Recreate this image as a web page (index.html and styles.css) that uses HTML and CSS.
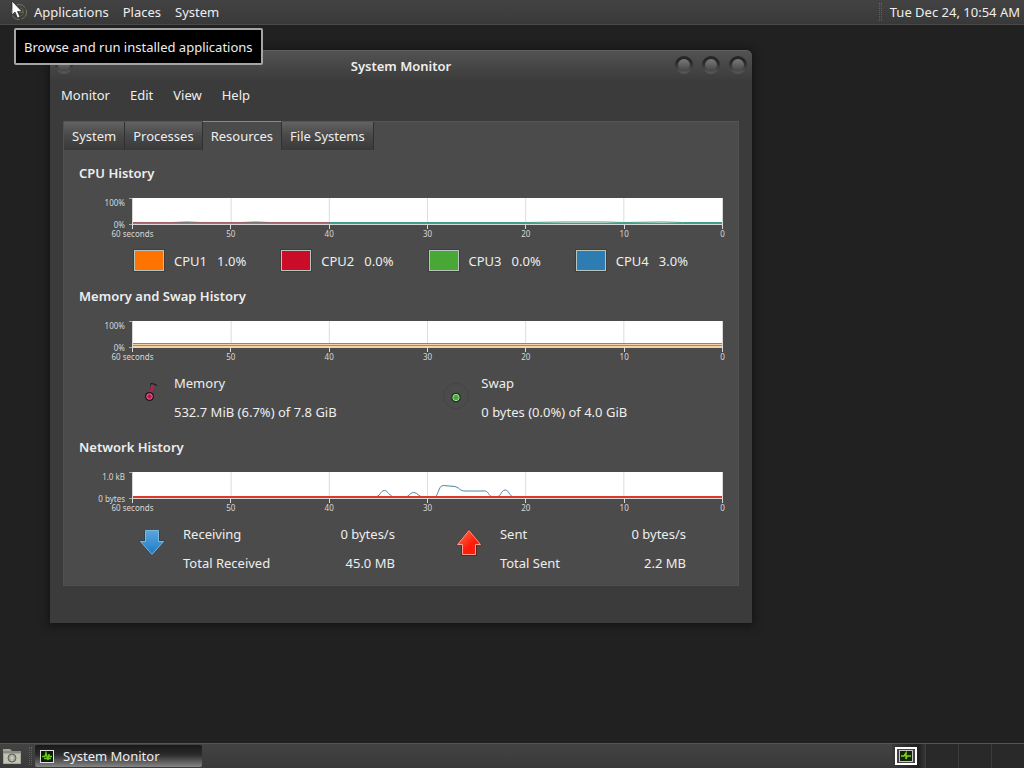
FILE: index.html
```html
<!DOCTYPE html>
<html lang="en">
<head>
  <meta charset="UTF-8">
  <meta name="viewport" content="width=device-width, initial-scale=1.0">
  <title>System Monitor</title>
  <link rel="stylesheet" href="styles.css">
</head>
<body>
  <header class="panel panel-top">
    <svg class="menu-logo" viewBox="0 0 18 18" aria-hidden="true">
      <circle cx="9" cy="9" r="7.5" fill="none" stroke="#77775c" stroke-dasharray="9 2"/>
      <circle cx="9" cy="9" r="4.5" fill="none" stroke="#62624e" stroke-dasharray="8 3"/>
      <path d="M9 9h4" stroke="#85856a"/>
    </svg>
    <nav class="panel-menu">
      <button type="button">Applications</button>
      <button type="button">Places</button>
      <button type="button">System</button>
    </nav>
    <span class="grip"></span>
    <time class="clock" datetime="2019-12-24T10:54">Tue Dec 24, 10:54 AM</time>
  </header>

  <main class="desktop">
    <section class="window">
      <div class="titlebar">
        <button type="button" class="window-button" aria-label="Window menu"></button>
        <h1>System Monitor</h1>
        <div class="window-controls">
          <button type="button" class="window-button" aria-label="Minimize"></button>
          <button type="button" class="window-button" aria-label="Maximize"></button>
          <button type="button" class="window-button" aria-label="Close"></button>
        </div>
      </div>

      <nav class="menubar">
        <button type="button">Monitor</button>
        <button type="button">Edit</button>
        <button type="button">View</button>
        <button type="button">Help</button>
      </nav>

      <div class="notebook">
        <div class="tabs" role="tablist">
          <button type="button" class="tab" role="tab">System</button>
          <button type="button" class="tab" role="tab">Processes</button>
          <button type="button" class="tab active" role="tab" aria-selected="true">Resources</button>
          <button type="button" class="tab" role="tab">File Systems</button>
        </div>

        <div class="resources">
          <section class="history">
            <h2>CPU History</h2>
            <div class="chart">
              <div class="y-axis"><span>100%</span><span>0%</span></div>
              <div class="plot">
                <svg viewBox="0 0 600 26" preserveAspectRatio="none">
                  <path class="grid-line" d="M100 0V26M200 0V26M300 0V26M400 0V26M500 0V26"/>
                  <path class="line cpu3" d="M0 25.5H600"/>
                  <path class="line cpu4" d="M0 24.5H400L440 24H480L500 24.5L540 24L560 24.5H600"/>
                  <path class="line cpu2" d="M0 24.5H40L55 24L70 24.5H110L125 24L140 24.5H200"/>
                </svg>
              </div>
              <div class="x-axis"><span>60 seconds</span><span>50</span><span>40</span><span>30</span><span>20</span><span>10</span><span>0</span></div>
            </div>
            <div class="cpu-legend">
              <div class="cpu"><button type="button" class="swatch orange" aria-label="CPU1 color"></button><span>CPU1</span><span>1.0%</span></div>
              <div class="cpu"><button type="button" class="swatch red" aria-label="CPU2 color"></button><span>CPU2</span><span>0.0%</span></div>
              <div class="cpu"><button type="button" class="swatch green" aria-label="CPU3 color"></button><span>CPU3</span><span>0.0%</span></div>
              <div class="cpu"><button type="button" class="swatch blue" aria-label="CPU4 color"></button><span>CPU4</span><span>3.0%</span></div>
            </div>
          </section>

          <section class="history">
            <h2>Memory and Swap History</h2>
            <div class="chart">
              <div class="y-axis"><span>100%</span><span>0%</span></div>
              <div class="plot">
                <svg viewBox="0 0 600 26" preserveAspectRatio="none">
                  <path class="grid-line" d="M100 0V26M200 0V26M300 0V26M400 0V26M500 0V26"/>
                  <path class="mem-fill" d="M0 23H600V26H0Z"/>
                  <path class="line mem" d="M0 22.5H600"/>
                  <path class="line swap" d="M0 24.5H600"/>
                </svg>
              </div>
              <div class="x-axis"><span>60 seconds</span><span>50</span><span>40</span><span>30</span><span>20</span><span>10</span><span>0</span></div>
            </div>
            <div class="mem-legend">
              <div class="mem-item">
                <svg class="pie" viewBox="0 0 32 32" aria-hidden="true">
                  <path d="M17 17V6.500Q20 6.500 23 8.500" fill="none" stroke="#1c1114"/>
                  <path d="M15.500 18L17 7.500L20.500 8.500L17.500 18Z" fill="#a82850"/>
                  <circle cx="15.500" cy="19.500" r="4.500" fill="#24121a"/>
                  <circle cx="15.500" cy="19.500" r="2.800" fill="#c0184c" stroke="#f0719b"/>
                </svg>
                <dl><dt>Memory</dt><dd>532.7 MiB (6.7%) of 7.8 GiB</dd></dl>
              </div>
              <div class="mem-item">
                <svg class="pie" viewBox="0 0 32 32" aria-hidden="true">
                  <circle cx="15" cy="19" r="12.500" fill="none" stroke="#444"/>
                  <circle cx="15" cy="20.500" r="4.800" fill="#1b301b"/>
                  <circle cx="15" cy="20.500" r="3.200" fill="#49a83c" stroke="#a3e29a"/>
                </svg>
                <dl><dt>Swap</dt><dd>0 bytes (0.0%) of 4.0 GiB</dd></dl>
              </div>
            </div>
          </section>

          <section class="history">
            <h2>Network History</h2>
            <div class="chart">
              <div class="y-axis"><span>1.0 kB</span><span>0 bytes</span></div>
              <div class="plot">
                <svg viewBox="0 0 600 26" preserveAspectRatio="none">
                  <path class="grid-line" d="M100 0V26M200 0V26M300 0V26M400 0V26M500 0V26"/>
                  <path class="line receiving" d="M0 25H246C252 25 252 18.500 256 18.500S261 25 267 25H277C281 25 282 20.500 286 20.500S291 25 296 25H307C311 25 311 13.500 316 13.500L328 14.500C334 16.500 333 19 338 19H359C363 20 362 25 368 25H370C375 25 375 18 379 18S384 25 388 25H600"/>
                  <path class="line sending" d="M0 25H600"/>
                </svg>
              </div>
              <div class="x-axis"><span>60 seconds</span><span>50</span><span>40</span><span>30</span><span>20</span><span>10</span><span>0</span></div>
            </div>
            <div class="net-legend">
              <div class="net-item">
                <svg class="arrow" viewBox="0 0 32 32" aria-hidden="true">
                  <defs>
                    <linearGradient id="down" x2="0" y2="1"><stop stop-color="#5aa5de"/><stop offset="1" stop-color="#1d7cc6"/></linearGradient>
                  </defs>
                  <path d="M8 6.500H24V16H29L16 32L3 16H8Z" fill="#203b50" opacity=".6"/>
                  <path d="M9.500 6.500H22.500V17.500H27.500L16 30.500L4.500 17.500H9.500Z" fill="url(#down)" stroke="#7db9df"/>
                </svg>
                <dl>
                  <div><dt>Receiving</dt><dd>0 bytes/s</dd></div>
                  <div><dt>Total Received</dt><dd>45.0 MB</dd></div>
                </dl>
              </div>
              <div class="net-item">
                <svg class="arrow" viewBox="0 0 32 32" aria-hidden="true">
                  <defs>
                    <linearGradient id="up" x2="1" y2="1"><stop stop-color="#ff7352"/><stop offset=".6" stop-color="#ff1c08"/></linearGradient>
                  </defs>
                  <path d="M16 5L29 21H24V32H8V21H3Z" fill="#651510" opacity=".7"/>
                  <path d="M16 6.500L27.500 20.500H22.500V30.500H9.500V20.500H4.500Z" fill="url(#up)" stroke="#ff9c88"/>
                </svg>
                <dl>
                  <div><dt>Sent</dt><dd>0 bytes/s</dd></div>
                  <div><dt>Total Sent</dt><dd>2.2 MB</dd></div>
                </dl>
              </div>
            </div>
          </section>
        </div>
      </div>
    </section>
  </main>

  <footer class="panel panel-bottom">
    <button type="button" class="show-desktop" aria-label="Show desktop">
      <svg viewBox="0 0 20 18" aria-hidden="true">
        <path d="M1 2H8L10 4H19V17H1Z" fill="#a5a697"/>
        <path d="M1 5H19" stroke="#70716a"/>
        <path d="M2 7H18V16H2Z" fill="#c2c3b5"/>
        <circle cx="10" cy="11" r="4" fill="#a2a397" stroke="#5d5e56"/>
        <path d="M10 8V14M8 11H12" stroke="#d7d8cb"/>
      </svg>
    </button>
    <span class="grip"></span>
    <button type="button" class="task">
      <svg viewBox="0 0 16 16" aria-hidden="true">
        <rect x="1.500" y="2.500" width="13" height="12" fill="#0c1a06" stroke="#e0e0e0"/>
        <path d="M3 8.500H6L7 5L9 12L10 6V8.500H13M5 10.500H12" fill="none" stroke="#6cc721" stroke-width="1.500"/>
      </svg>
      <span>System Monitor</span>
    </button>
    <div class="workspaces">
      <button type="button" class="workspace current" aria-label="Workspace 1">
        <svg viewBox="0 0 22 18" aria-hidden="true">
          <rect x="1" y="1" width="20" height="16" fill="#444" stroke="#fff" stroke-width="2"/>
          <rect x="4.500" y="3.500" width="13" height="11" fill="#14260a" stroke="#c4c4c4"/>
          <path d="M6 9H9L11 6V12L12 9H16" fill="none" stroke="#7ed321" stroke-width="1.500"/>
        </svg>
      </button>
      <button type="button" class="workspace" aria-label="Workspace 2"></button>
      <button type="button" class="workspace" aria-label="Workspace 3"></button>
      <button type="button" class="workspace" aria-label="Workspace 4"></button>
    </div>
  </footer>

  <div class="tooltip" role="tooltip">Browse and run installed applications</div>
  <svg class="cursor" viewBox="0 0 12 18" aria-hidden="true">
    <path d="M1 0V14L4 11L6.500 17L9 16L6.500 10.500H11Z" fill="#fff" stroke="#222" stroke-width=".7"/>
  </svg>
</body>
</html>
```
FILE: styles.css
```css
:root {
  --desktop: #212121;
  --window: #3b3b3b;
  --page: #4b4b4b;
  --text: #eeeeee;
  --axis: #d8d8d8;
}

* {
  box-sizing: border-box;
}

body {
  position: relative;
  display: flex;
  flex-direction: column;
  min-height: 100vh;
  margin: 0;
  background: var(--desktop);
  color: var(--text);
  font: 13px/20px "Noto Sans", sans-serif;
}

button {
  margin: 0;
  padding: 0;
  border: 0;
  background: none;
  color: inherit;
  font: inherit;
}

svg {
  display: block;
}

h1,
h2,
dl,
dd {
  margin: 0;
}

/* Panels */
.panel {
  display: flex;
  align-items: center;
  height: 25px;
  background: linear-gradient(#434343, #393939);
}

.panel-top {
  padding: 0 4px 0 10px;
  border-bottom: 1px solid #4a4a4a;
}

.menu-logo {
  width: 18px;
  height: 18px;
  margin-right: 6px;
}

.panel-menu {
  display: flex;
  gap: 14px;
  flex: 1;
}

.grip {
  width: 3px;
  height: 18px;
  border: 1px dotted #606060;
  border-width: 0 1px;
}

.clock {
  margin-left: 8px;
}

.panel-bottom {
  border-top: 1px solid #555;
}

.show-desktop {
  width: 20px;
  margin: 0 7px 0 2px;
}

.task {
  display: flex;
  align-items: center;
  gap: 8px;
  width: 167px;
  height: 22px;
  margin-left: 3px;
  padding-left: 4px;
  border-radius: 2px;
  background: linear-gradient(#181818, #2c2c2c 45%, #858585);
}

.task svg {
  width: 16px;
}

.workspaces {
  display: flex;
  height: 100%;
  margin-left: auto;
}

.workspace {
  width: 33px;
  border-left: 1px solid #3c3c3c;
  background: #292929;
}

.workspace.current {
  padding-left: 3px;
  border: 0;
  background: linear-gradient(90deg, #3a3a3a, #202020 80%, #353535);
}

.workspace.current svg {
  width: 22px;
}

/* Desktop */
.desktop {
  flex: 1;
  position: relative;
}

.window {
  position: absolute;
  top: 25px;
  left: 50px;
  width: 702px;
  padding-bottom: 37px;
  border-radius: 6px 6px 0 0;
  background: var(--window);
  box-shadow: 0 1px 8px 2px #141414;
}

.titlebar {
  display: flex;
  align-items: flex-start;
  height: 31px;
  padding: 5px 5px 0;
  border-top: 1px solid #606060;
  border-radius: 6px 6px 0 0;
  background: linear-gradient(#525252, var(--window));
}

.titlebar h1 {
  flex: 1;
  padding-left: 54px;
  font-size: 13px;
  font-weight: 600;
  line-height: 20px;
  text-align: center;
}

.window-controls {
  display: flex;
  gap: 9px;
}

.window-button {
  width: 18px;
  height: 18px;
  border: 3px solid transparent;
  border-radius: 50%;
  background: linear-gradient(#7a7a7a, #454545) padding-box, linear-gradient(#262626 30%, #5a5a5a) border-box;
}

.menubar {
  display: flex;
  gap: 20px;
  height: 28px;
  padding-left: 11px;
}

.menubar button {
  height: 28px;
}

/* Notebook */
.notebook {
  margin: 12px 13px 0;
  border: 1px solid #505050;
  border-top-color: #555;
  background: var(--page);
}

.tabs {
  display: flex;
  height: 28px;
}

.tab {
  padding: 0 8px;
  border-right: 1px solid #303030;
  background: linear-gradient(#626262, #484848 50%, #3a3a3a);
}

.tab.active {
  margin-top: -1px;
  border-top: 1px solid #8a8a8a;
  background: var(--page);
}

.resources {
  display: flex;
  flex-direction: column;
  gap: 15px;
  padding: 13px 15px 12px;
}

.history h2 {
  margin-bottom: 15px;
  font-size: 13px;
  font-weight: 600;
  line-height: 20px;
}

.chart {
  display: grid;
  grid-template-columns: 46px 1fr;
  column-gap: 7px;
  margin-bottom: 7px;
  font-size: 8px;
  color: var(--axis);
}

.y-axis {
  display: flex;
  flex-direction: column;
  justify-content: space-between;
  height: 32px;
  margin-bottom: -5px;
  line-height: 10px;
  text-align: right;
}

.plot {
  position: relative;
  border: 1px solid var(--axis);
  border-width: 0 1px 1px;
  background: #fff;
}

/* y axis ticks */
.plot::before {
  content: "";
  position: absolute;
  top: 0;
  bottom: -1px;
  left: -4px;
  width: 3px;
  border: 1px solid #aaa;
  border-width: 1px 0;
}

.plot svg {
  width: 100%;
  height: 26px;
}

.x-axis {
  grid-column: 2;
  display: flex;
  justify-content: space-between;
  height: 18px;
  line-height: 10px;
}

.x-axis span {
  display: flex;
  flex-direction: column;
  align-items: center;
  width: 1px;
  white-space: nowrap;
}

.x-axis span::before {
  content: "";
  width: 1px;
  height: 4px;
  background: var(--axis);
}

.grid-line,
.line {
  fill: none;
  stroke: #ddd;
  vector-effect: non-scaling-stroke;
}

.cpu2 { stroke: #a0606a; }
.cpu3 { stroke: #6f8a80; }
.cpu4 { stroke: #3f9c84; }
.mem { stroke: #8f8a5c; }
.swap { stroke: #a88a60; }
.mem-fill { fill: #f3d3a4; }
.receiving { stroke: #4d86a4; }
.sending { stroke: #d93a2a; stroke-width: 2; }

/* Legends */
.cpu-legend,
.mem-legend,
.net-legend {
  display: grid;
  margin-left: 53px;
}

.cpu-legend {
  grid-template-columns: repeat(4, 1fr);
  padding-right: 2px;
}

.cpu {
  display: flex;
  align-items: center;
  gap: 10px;
  height: 21px;
  padding-left: 2px;
}

.swatch {
  width: 30px;
  height: 21px;
  border: 1px solid #b8c4bd;
  outline: 1px solid #3d3d3d;
}

.orange { background: #ff7300; }
.red { background: #cb0c29; }
.green { background: #49a835; }
.blue { background: #2d7db3; }

.mem-legend {
  grid-template-columns: 52% 48%;
}

.mem-item {
  display: flex;
  gap: 8px;
  padding-left: 2px;
}

.pie,
.arrow {
  flex: none;
  width: 32px;
  height: 32px;
}

.pie {
  margin-top: 4px;
}

dl {
  display: flex;
  flex-direction: column;
  gap: 9px;
}

.net-legend {
  grid-template-columns: 10fr 9fr;
  gap: 58px;
  padding: 0 37px 0 4px;
}

.net-item {
  display: flex;
  gap: 15px;
}

.net-item dl {
  flex: 1;
}

.net-item dl div {
  display: flex;
  justify-content: space-between;
}

/* Overlays */
.tooltip {
  position: absolute;
  top: 28px;
  left: 14px;
  padding: 7px 8px 6px;
  border: 2px solid #a5a5a5;
  border-radius: 2px;
  background: #000;
}

.cursor {
  position: absolute;
  top: 1px;
  left: 11px;
  width: 12px;
}
```
